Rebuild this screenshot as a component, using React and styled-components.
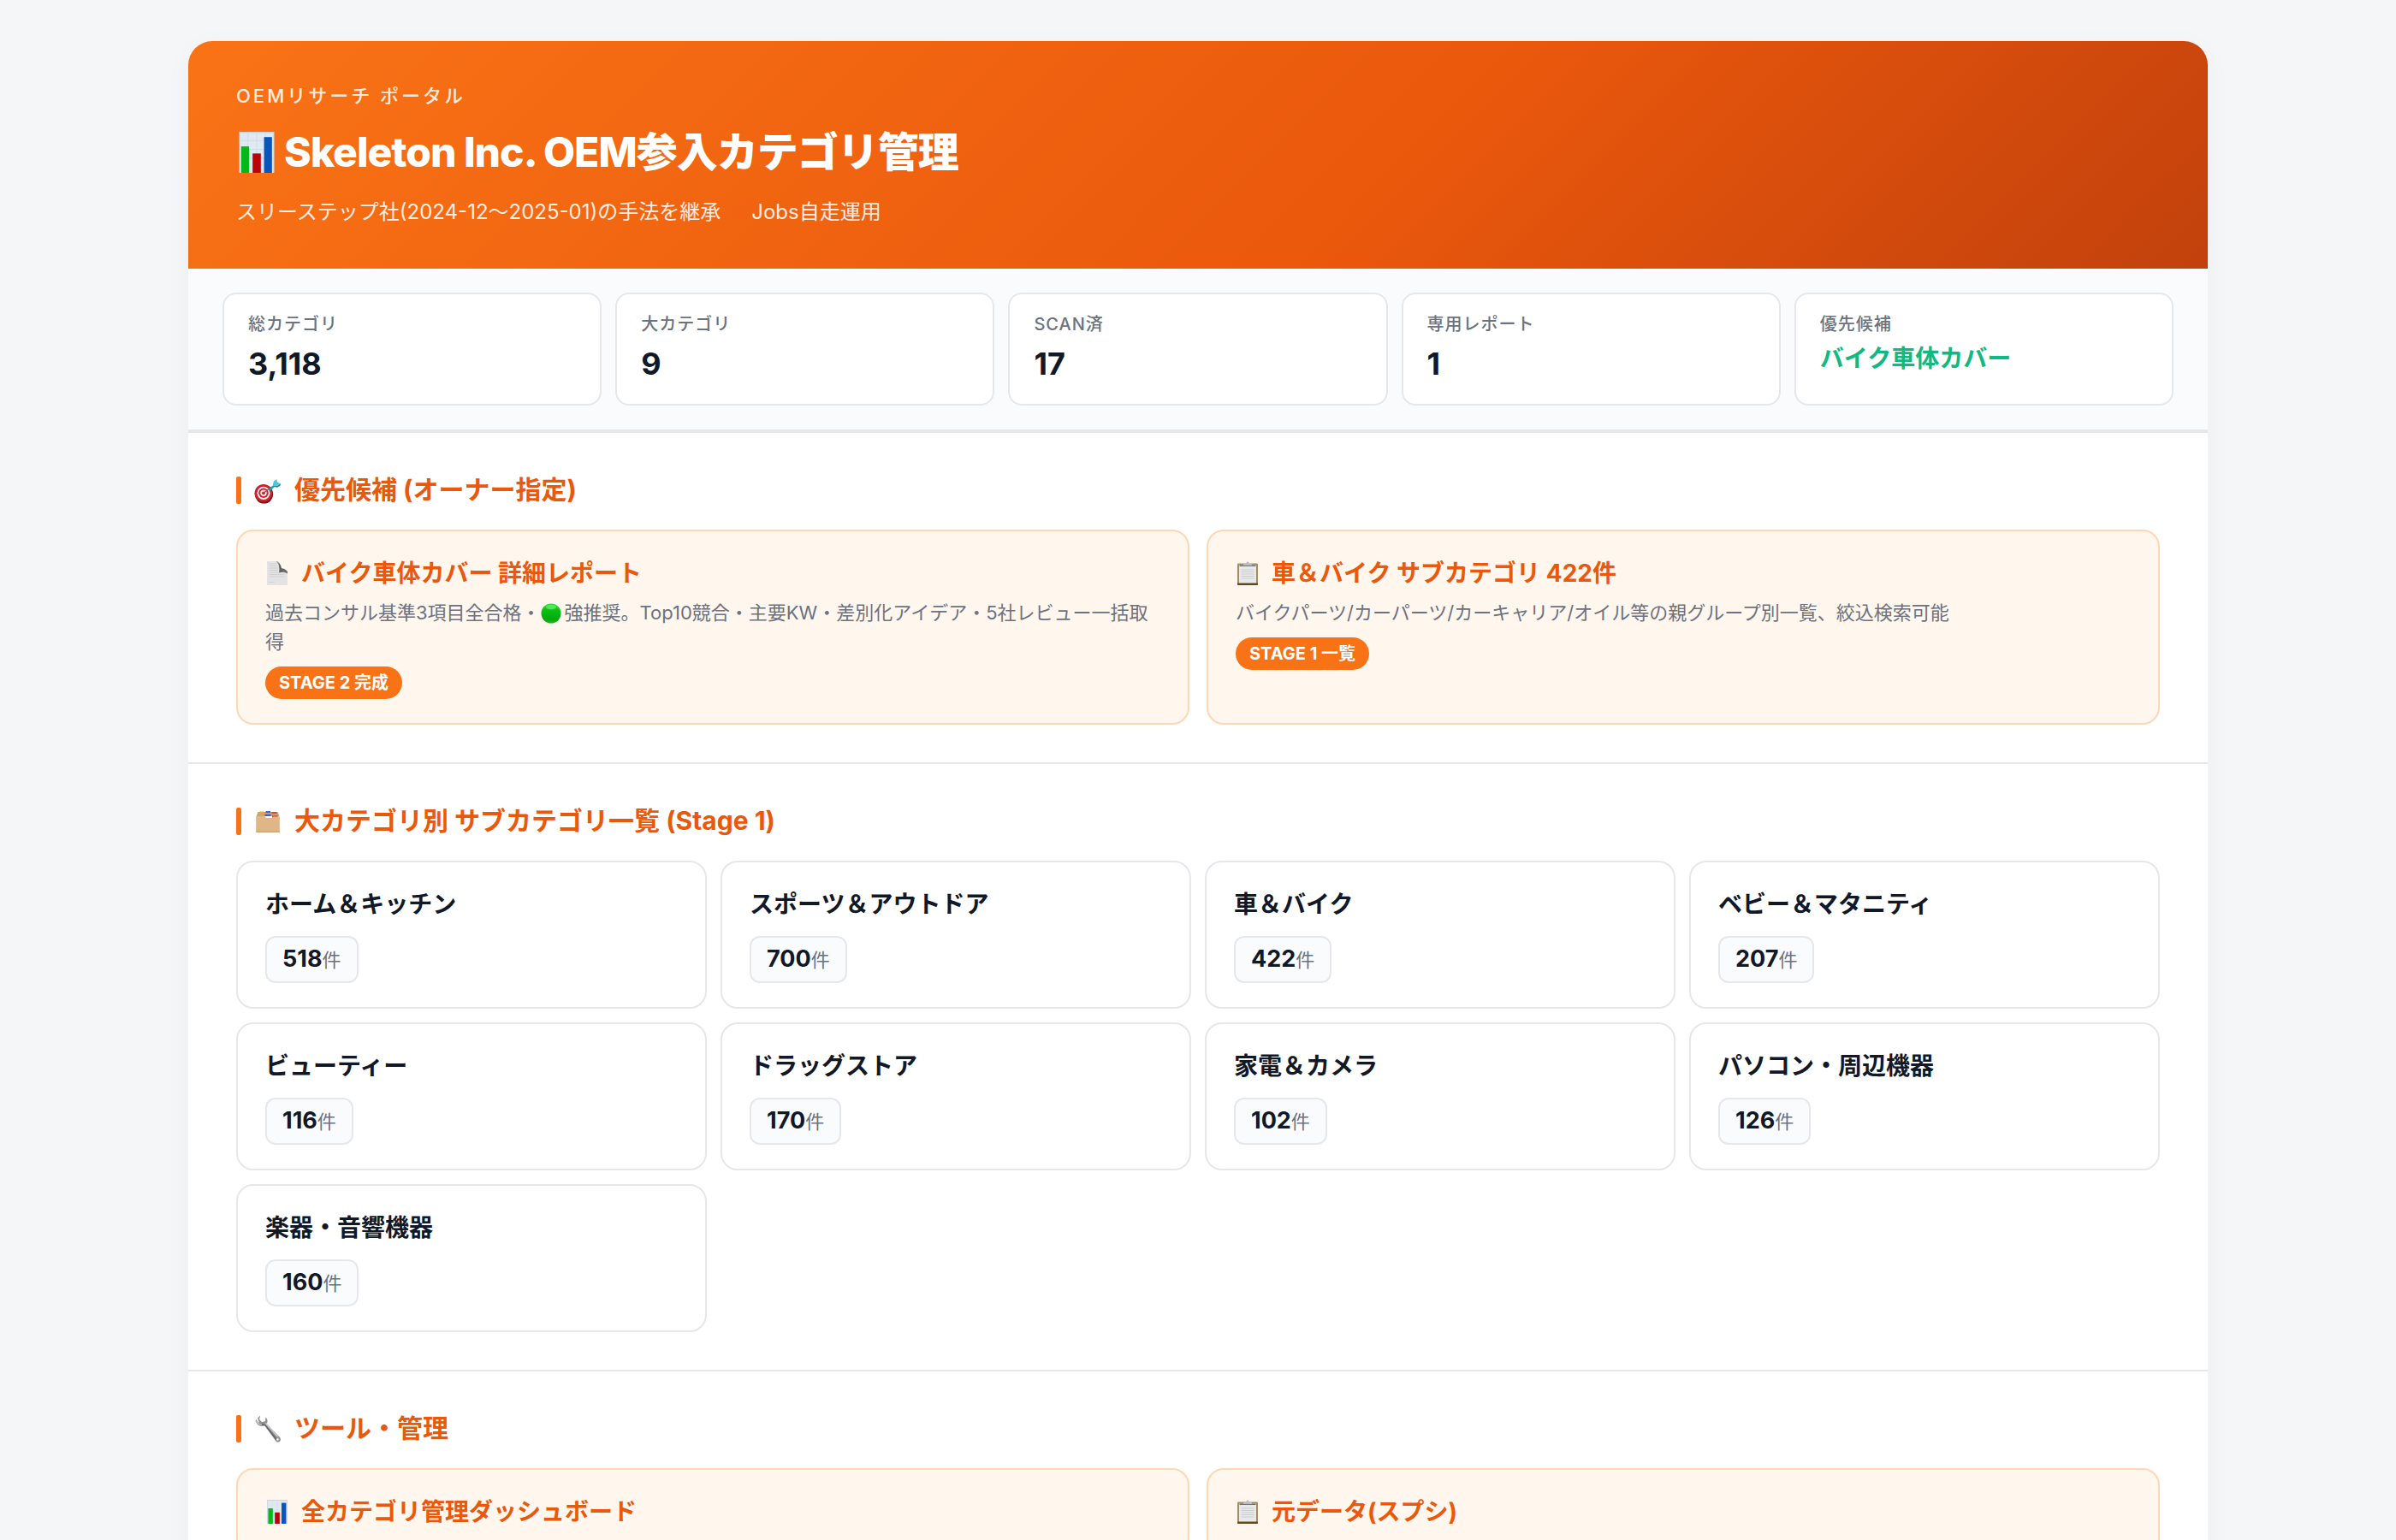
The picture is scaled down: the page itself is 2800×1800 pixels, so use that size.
import React from 'react';
import styled, { createGlobalStyle } from 'styled-components';

const GlobalStyle = createGlobalStyle`
  * {
    box-sizing: border-box;
  }

  body {
    margin: 0;
    padding: 48px;
    background: #f4f6f8;
    color: #111827;
    font-family: Inter, "Noto Sans CJK JP", sans-serif;
    font-size: 28px;
    line-height: 1.5;
  }

  h1, h2, h3, p, dl, dd, ul {
    margin: 0;
    padding: 0;
  }
`;

const Container = styled.main`
  max-width: 2360px;
  margin: 0 auto;
  background: #fff;
  border-radius: 28px;
  overflow: hidden;
  box-shadow: 0 8px 32px rgba(0, 0, 0, 0.04);
`;

const Header = styled.header`
  padding: 48px 56px;
  color: #fff;
  background: linear-gradient(135deg, #f97316 0%, #ea580c 60%, #c2410c 100%);
`;

const Eyebrow = styled.p`
  font-size: 22px;
  line-height: 32px;
  font-weight: 500;
  letter-spacing: 3px;
  opacity: 0.85;
`;

const Title = styled.h1`
  display: flex;
  align-items: center;
  gap: 8px;
  margin: 14px 0 16px;
  font-size: 48px;
  line-height: 72px;
  font-weight: 800;
  letter-spacing: -1px;
`;

const Lead = styled.p`
  display: flex;
  gap: 36px;
  font-size: 24px;
  line-height: 36px;
  opacity: 0.88;
`;

const Stats = styled.dl`
  display: grid;
  grid-template-columns: repeat(5, 1fr);
  gap: 16px;
  padding: 28px 40px;
  background: #fafbfd;
  border-bottom: 4px solid #e5e7eb;
`;

const Stat = styled.div`
  padding: 20px 28px;
  background: #fff;
  border: 2px solid #e5e7eb;
  border-radius: 16px;
`;

const StatLabel = styled.dt`
  margin-bottom: 4px;
  color: #6b7280;
  font-size: 20px;
  line-height: 30px;
  font-weight: 500;
  letter-spacing: 1px;
`;

const StatValue = styled.dd`
  color: ${(props) => (props.$highlight ? '#10b981' : '#111827')};
  font-size: ${(props) => (props.$highlight ? '28px' : '36px')};
  font-weight: 700;
`;

const Section = styled.section`
  padding: 44px 56px;
  border-bottom: 2px solid #e5e7eb;

  &:last-child {
    border-bottom: 0;
  }
`;

const SectionTitle = styled.h2`
  display: flex;
  align-items: center;
  gap: 14px;
  margin-bottom: 24px;
  color: #ea580c;
  font-size: 30px;
  line-height: 45px;
  font-weight: 700;

  &::before {
    content: "";
    flex: none;
    width: 6px;
    height: 32px;
    border-radius: 2px;
    background: #f97316;
  }
`;

const FeatureGrid = styled.div`
  display: grid;
  grid-template-columns: repeat(2, 1fr);
  gap: 20px;
`;

const FeatureCard = styled.a`
  display: block;
  padding: 28px 32px;
  background: #fff6ed;
  border: 2px solid #fed7b4;
  border-radius: 20px;
  color: inherit;
  text-decoration: none;
`;

const FeatureTitle = styled.h3`
  display: flex;
  align-items: center;
  gap: 14px;
  color: #ea580c;
  font-size: 28px;
  font-weight: 700;
`;

const FeatureText = styled.p`
  margin: 8px 0 12px;
  color: #6b7280;
  font-size: 22px;
  line-height: 34px;
`;

const Tag = styled.span`
  display: block;
  width: fit-content;
  padding: 4px 16px;
  border-radius: 20px;
  background: #f97316;
  color: #fff;
  font-size: 20px;
  line-height: 30px;
  font-weight: 700;
`;

const CategoryGrid = styled.ul`
  display: grid;
  grid-template-columns: repeat(4, 1fr);
  gap: 16px;
  list-style: none;
`;

const CategoryCard = styled.a`
  display: block;
  padding: 28px 32px;
  border: 2px solid #e5e7eb;
  border-radius: 20px;
  color: inherit;
  text-decoration: none;
`;

const CategoryName = styled.h3`
  margin-bottom: 16px;
  font-size: 28px;
  font-weight: 700;
`;

const Count = styled.span`
  display: block;
  width: fit-content;
  padding: 8px 18px;
  background: #fafbfd;
  border: 2px solid #e5e7eb;
  border-radius: 12px;
  color: #6b7280;
  font-size: 22px;
  line-height: 34px;

  strong {
    color: #111827;
    font-size: 27px;
    font-weight: 700;
  }
`;

const Icon = styled.svg`
  flex: none;
  width: ${(props) => props.$size}px;
  height: ${(props) => props.$size}px;
`;

const Dot = styled(Icon)`
  margin-right: 4px;
  vertical-align: -5px;
`;

const ChartIcon = ({ size }) => (
  <Icon $size={size} viewBox="0 0 28 28" aria-hidden="true">
    <rect x="2" y="0" width="24" height="28" fill="#c3cfda" />
    <rect x="2.6" y="0.8" width="22.8" height="27.2" fill="#dfe9f2" />
    <path d="M8 1v26M14 1v26M20 1v26M3 6h22M3 12h22M3 18h22" stroke="#cbd8e4" strokeWidth="0.4" />
    <rect x="3.4" y="10" width="5.4" height="18" fill="#06b817" />
    <rect x="11.2" y="14.8" width="5.6" height="13.2" fill="#b90408" />
    <rect x="19" y="3.6" width="5.4" height="24.4" fill="#0656bd" />
  </Icon>
);

const TargetIcon = () => (
  <Icon $size={34} viewBox="0 0 34 34" aria-hidden="true">
    <ellipse cx="12.5" cy="21.6" rx="10.6" ry="11" fill="#7d1119" />
    <ellipse cx="11.8" cy="20.4" rx="10.4" ry="10.4" fill="#c9232e" />
    <circle cx="12" cy="20.3" r="7.6" fill="#f7eeee" />
    <circle cx="12" cy="20.3" r="5.7" fill="#c9232e" />
    <circle cx="12" cy="20.3" r="3.7" fill="#f7eeee" />
    <circle cx="12" cy="20.3" r="1.9" fill="#c9232e" />
    <path d="M12 20.3 22 13" stroke="#7b5c53" strokeWidth="1.2" />
    <path d="M17.5 16.6 24 10.6l1.6 2L19 18z" fill="#22a0b2" />
    <path d="m22.6 12.2 1.2-5.6L27.4 4l.4 3.6L31.4 9l-3.6 2.8z" fill="#4cc9d0" />
    <path d="m22.6 12.6 5.6-.9 3.4-2.6.2 2.2-3.8 2.4z" fill="#188697" />
  </Icon>
);

const PageIcon = () => (
  <Icon $size={28} viewBox="0 0 28 28" aria-hidden="true">
    <defs>
      <linearGradient id="page-curl" x1="0" y1="0" x2="0.6" y2="1">
        <stop offset="0" stopColor="#a8a8a8" />
        <stop offset="0.5" stopColor="#5c5c5c" />
        <stop offset="1" stopColor="#6d6d6d" />
      </linearGradient>
    </defs>
    <path d="M2 0h12c3.200 2 4.600 5 4.800 8.200C21.500 8.400 24 9.600 26 12v16H2z" fill="#e3e3e3" />
    <path d="M4.500 3h8M4.500 5.500h9M4.500 8h10M4.500 10.500h10M4.500 13h11M4.500 15.500h18M4.500 18h18M4.500 24.500h6" stroke="#cdcdcd" strokeWidth="0.8" />
    <path d="M12.500 0c3.600 3 4.600 7.500 3.600 13.500 3.500-1.500 7-1 9.900 1V12c-2-2.400-4.500-3.600-7.200-3.800C18.600 5 17.200 2 14 0z" fill="url(#page-curl)" />
  </Icon>
);

const ClipboardIcon = () => (
  <Icon $size={28} viewBox="0 0 28 28" aria-hidden="true">
    <rect x="2" y="2.4" width="24" height="25.6" rx="1.4" fill="#a98a58" />
    <rect x="2" y="25.6" width="24" height="2.4" rx="1" fill="#65451d" />
    <path d="M4 4.400h20v21H4z" fill="#e6e8ea" />
    <path d="M6.500 10h15M6.500 12.500h15M6.500 15h15M6.500 17.500h15M6.500 20h15" stroke="#cdced0" strokeWidth="1.2" />
    <path d="M4.500 4.400h19v1.600h-19z" fill="#70757c" />
    <path d="M9 5V3.200l3-1L14 0l2 2.200 3 1V5z" fill="#b9bec4" />
  </Icon>
);

const DividersIcon = () => (
  <Icon $size={34} viewBox="0 0 34 34" aria-hidden="true">
    <path d="M5.500 6h23l2 5H3.800z" fill="#c9a06b" />
    <path d="M7.500 5.500h5.500v3H6.500z" fill="#f0a63d" />
    <path d="M14.500 5h5.500v2h-5.500z" fill="#3f62e6" />
    <path d="M21.500 6h6v2h-6z" fill="#ea3f45" />
    <path d="M6.500 9.400h6v1.800H6z" fill="#e9a24a" />
    <path d="M13.500 8.800h7v2h-7z" fill="#3657e8" />
    <path d="M22 10.400h6.800v2H22z" fill="#e5353d" />
    <path d="M3.200 11h10l1.600 2h7l1.600-1.400h7.400V30H3.200z" fill="#dfb685" />
    <path d="M3.200 28.800h27.600V30H3.200z" fill="#cda06c" />
  </Icon>
);

const WrenchIcon = () => (
  <Icon $size={34} viewBox="0 0 34 34" aria-hidden="true">
    <path d="M8.200 1.600 7 5.800l3 3.400 4-1.200.6-4.400c2.200 2.200 2.600 5 1.200 7.600L31 27c1.400 1.800 1.200 3.800-.2 5-1.600 1.200-3.600.8-4.800-1L13.400 13.600C9 15 4.400 13.200 2.600 8.200l.4-2.400 3 4 .8-.6L5 4.400z" fill="#8f9297" />
    <path d="M9.500 11.500c2 .8 3.400.6 4.600 1.400L27.500 30" stroke="#67595c" strokeWidth="1.4" fill="none" />
    <path d="m14.500 10.500 14 15.500" stroke="#c9ccd1" strokeWidth="1.6" />
    <path d="M3.500 8c1.400 2.800 3.800 4.200 6.500 4" stroke="#c6cbd2" strokeWidth="1.2" fill="none" />
    <circle cx="28.4" cy="29.4" r="1.3" fill="#f6f2f2" />
  </Icon>
);

const GreenDot = () => (
  <Dot $size={24} viewBox="0 0 24 24" aria-hidden="true">
    <defs>
      <linearGradient id="green-dot" x1="0" y1="0" x2="0" y2="1">
        <stop offset="0" stopColor="#2fdc3a" />
        <stop offset="0.35" stopColor="#0bbf14" />
        <stop offset="0.8" stopColor="#00a80a" />
        <stop offset="1" stopColor="#18c322" />
      </linearGradient>
    </defs>
    <circle cx="12" cy="12" r="11.5" fill="url(#green-dot)" />
    <ellipse cx="12" cy="4.5" rx="6" ry="2.8" fill="#6df075" opacity="0.7" />
  </Dot>
);

const stats = [
  { label: '総カテゴリ', value: '3,118' },
  { label: '大カテゴリ', value: '9' },
  { label: 'SCAN済', value: '17' },
  { label: '専用レポート', value: '1' },
  { label: '優先候補', value: 'バイク車体カバー', highlight: true },
];

const categories = [
  { name: 'ホーム＆キッチン', count: 518 },
  { name: 'スポーツ＆アウトドア', count: 700 },
  { name: '車＆バイク', count: 422 },
  { name: 'ベビー＆マタニティ', count: 207 },
  { name: 'ビューティー', count: 116 },
  { name: 'ドラッグストア', count: 170 },
  { name: '家電＆カメラ', count: 102 },
  { name: 'パソコン・周辺機器', count: 126 },
  { name: '楽器・音響機器', count: 160 },
];

const App = () => {
  return (
    <>
      <GlobalStyle />
      <Container>
        <Header>
          <Eyebrow>OEMリサーチ ポータル</Eyebrow>
          <Title>
            <ChartIcon size={48} />
            Skeleton Inc. OEM参入カテゴリ管理
          </Title>
          <Lead>
            <span>スリーステップ社(2024-12〜2025-01)の手法を継承</span>
            <span>Jobs自走運用</span>
          </Lead>
        </Header>

        <Stats>
          {stats.map((stat) => (
            <Stat key={stat.label}>
              <StatLabel>{stat.label}</StatLabel>
              <StatValue $highlight={stat.highlight}>{stat.value}</StatValue>
            </Stat>
          ))}
        </Stats>

        {/* Priority candidates */}
        <Section>
          <SectionTitle>
            <TargetIcon />
            優先候補 (オーナー指定)
          </SectionTitle>
          <FeatureGrid>
            <FeatureCard href="#report">
              <FeatureTitle>
                <PageIcon />
                バイク車体カバー 詳細レポート
              </FeatureTitle>
              <FeatureText>
                過去コンサル基準3項目全合格・<GreenDot />強推奨。Top10競合・主要KW・差別化アイデア・5社レビュー一括取得
              </FeatureText>
              <Tag>STAGE 2 完成</Tag>
            </FeatureCard>
            <FeatureCard href="#car-bike">
              <FeatureTitle>
                <ClipboardIcon />
                車＆バイク サブカテゴリ 422件
              </FeatureTitle>
              <FeatureText>
                バイクパーツ/カーパーツ/カーキャリア/オイル等の親グループ別一覧、絞込検索可能
              </FeatureText>
              <Tag>STAGE 1 一覧</Tag>
            </FeatureCard>
          </FeatureGrid>
        </Section>

        {/* Subcategories */}
        <Section>
          <SectionTitle>
            <DividersIcon />
            大カテゴリ別 サブカテゴリ一覧 (Stage 1)
          </SectionTitle>
          <CategoryGrid>
            {categories.map((category) => (
              <li key={category.name}>
                <CategoryCard href="#category">
                  <CategoryName>{category.name}</CategoryName>
                  <Count>
                    <strong>{category.count}</strong>件
                  </Count>
                </CategoryCard>
              </li>
            ))}
          </CategoryGrid>
        </Section>

        {/* Tools */}
        <Section>
          <SectionTitle>
            <WrenchIcon />
            ツール・管理
          </SectionTitle>
          <FeatureGrid>
            <FeatureCard href="#dashboard">
              <FeatureTitle>
                <ChartIcon size={28} />
                全カテゴリ管理ダッシュボード
              </FeatureTitle>
            </FeatureCard>
            <FeatureCard href="#source">
              <FeatureTitle>
                <ClipboardIcon />
                元データ(スプシ)
              </FeatureTitle>
            </FeatureCard>
          </FeatureGrid>
        </Section>
      </Container>
    </>
  );
};

export default App;
